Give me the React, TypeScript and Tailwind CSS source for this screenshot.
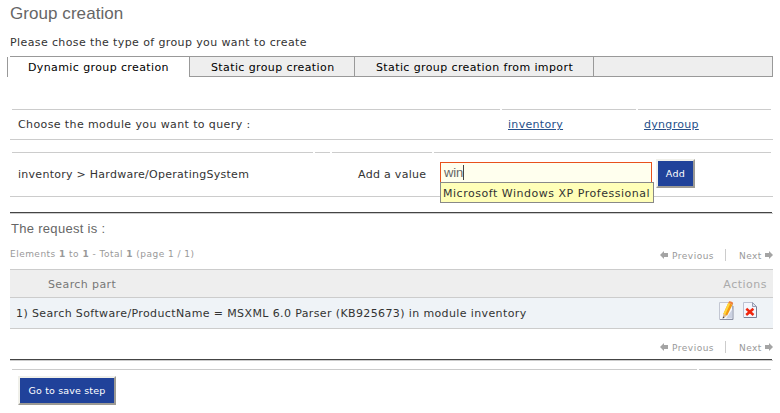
import type { ReactNode } from "react";

const sans = "font-['DejaVu_Sans',sans-serif]";
const arial = "font-['Liberation_Sans',sans-serif]";

function Arrow({ flip = false }: { flip?: boolean }) {
  return (
    <svg width="8" height="8" viewBox="0 0 8 8" className={flip ? "-scale-x-100" : ""}>
      <path d="M0 4 L4 0 V2 H8 V6 H4 V8 Z" fill="#a4a4a4" />
    </svg>
  );
}

function Pager() {
  return (
    <div className="flex h-3 items-center text-[9px] leading-3 text-[#999]">
      <Arrow />
      <span className="ml-1 w-[53px] pt-[2px] tracking-[0.5px]">Previous</span>
      <span className="h-3 w-px bg-[#ccc]" />
      <span className="ml-[13px] w-[26px] pt-[2px] tracking-[0.45px]">Next</span>
      <Arrow flip />
    </div>
  );
}

function CellLines({ widths }: { widths: string[] }) {
  return (
    <div className="ml-[2px] flex h-px gap-[2px]">
      {widths.map((w) => (
        <span key={w} className={`h-px bg-[#ccc] ${w}`} />
      ))}
    </div>
  );
}

function Rule() {
  return (
    <div className="h-[2px] border-b border-[#ccc]">
      <div className="mr-px h-px bg-[#444]" />
    </div>
  );
}

function Button({ className, children }: { className: string; children: ReactNode }) {
  return (
    <button
      className={`h-[29px] border-2 border-t-[#f0f0ea] border-r-[#9c9a94] border-b-[#9c9a94] border-l-[#f0f0ea] bg-[#20429a] text-[9.5px] leading-3 whitespace-nowrap text-white ${className}`}
    >
      {children}
    </button>
  );
}

function EditIcon() {
  return (
    <svg width="16" height="20" viewBox="0 0 16 20">
      <path d="M.5 1.5h13v17H.5z" fill="#f7f8fc" stroke="#c3c7d3" />
      <path d="M14 5v13.5H1" fill="none" stroke="#8b90a3" />
      <path d="M7 17.5h6.5V8z" fill="#ccd2e2" />
      <path d="M4.3 13l5-11.2 4.2 2L8.2 14.6z" fill="#f39a12" />
      <path d="M4.3 13l5-11.2 1.9.9L6.2 13.8z" fill="#ffd63c" />
      <path d="M9.3 1.8L10.2.2q2.5-.3 4 1.8l-.7 1.8z" fill="#f0803a" />
      <path d="M3.8 17.4l.5-4.4 3.9 1.6z" fill="#dcb98c" />
      <path d="M3.7 17.8l.3-2.3 1.6.7z" fill="#3c3c44" />
    </svg>
  );
}

function DeleteIcon() {
  return (
    <svg width="14" height="16" viewBox="0 0 14 16">
      <path d="M.5.5h9l4 4v11H.5z" fill="#f4f6fd" stroke="#bcc2d2" />
      <path d="M13.5 4.5v11H1" fill="none" stroke="#7b8197" />
      <path d="M9.5.5v4h4z" fill="#dce1ee" stroke="#989eb2" />
      <path d="M3.3 6.8l7.2 6.2M10.4 6.8l-7.2 6.2" stroke="#f0260e" strokeWidth="2.5" />
    </svg>
  );
}

export default function App() {
  return (
    <div className={`h-[413px] w-[780px] overflow-hidden bg-white text-[11px] leading-4 tracking-[0.39px] whitespace-nowrap text-[#333] ${sans}`}>
      <div className="ml-[10px] w-[763px]">
        <header className="h-14">
          <h1 className={`h-[35px] pt-1 text-[17px] leading-5 tracking-[0.06px] text-[#666] ${arial}`}>Group creation</h1>
          <p>Please chose the type of group you want to create</p>
        </header>

        <nav className="-ml-[3px] flex h-[21px] text-black">
          <div className="mt-px w-[3px] border-l border-[#999]" />
          <div className="w-[180px] border-t border-r border-[#999] bg-white pt-[3px] pl-[18px]">Dynamic group creation</div>
          <div className="w-[165px] border-y border-r border-[#999] bg-[#eee] pt-[3px] pl-[21px]">Static group creation</div>
          <div className="w-[239px] border-y border-r border-[#999] bg-[#eee] pt-[3px] pl-[21px]">Static group creation from import</div>
          <div className="flex-1 border-y border-r border-[#999] bg-[#eee]" />
        </nav>

        <section className="mt-8 h-[31px] border-b border-[#ccc]">
          <CellLines widths={["w-[488px]", "w-[134px]", "w-[133px]"]} />
          <div className="flex pt-[7px] pl-2">
            <span className="w-[490px]">Choose the module you want to query :</span>
            <span className="w-[136px] tracking-[0.3px]">
              <a className="text-[#26508a] underline">inventory</a>
            </span>
            <a className="tracking-[0.3px] text-[#26508a] underline">dyngroup</a>
          </div>
        </section>

        <section className="mt-3 h-[45px] border-b border-[#ccc]">
          <CellLines widths={["w-[301px]", "w-[15px]", "w-[100px]", "w-[337px]"]} />
          <div className="flex pl-2">
            <span className="w-[340px] pt-[14px] tracking-[0.27px]">inventory &gt; Hardware/OperatingSystem</span>
            <span className="w-[82px] pt-[14px] tracking-[0.3px]">Add a value</span>
            <div className="relative mt-[9px] h-5 w-[212px]">
              <div className={`flex h-[21px] border border-[#e8511c] bg-[#ffffee] pt-[2px] pl-[3px] text-[13px] leading-[16px] tracking-[-0.1px] text-[#666] ${arial}`}>
                win
                <span className="h-[15px] w-px bg-[#444]" />
              </div>
              <div className="absolute top-5 left-0 z-10 h-[21px] w-[214px] border border-[#888] bg-[#ffffb8] pt-[3px] pl-[2px] leading-[15px] tracking-[0.52px]">
                Microsoft Windows XP Professional
              </div>
            </div>
            <Button className="mt-[6px] ml-1 w-[39px] tracking-[0.3px]">Add</Button>
          </div>
        </section>

        <div className="mt-[15px]">
          <Rule />
        </div>

        <section className="flex h-[55px] justify-between">
          <div>
            <h2 className={`pt-[7px] pl-px text-[13px] leading-4 tracking-[0.3px] text-[#666] ${arial}`}>The request is :</h2>
            <p className="pt-[11px] text-[9px] leading-3 tracking-[0.47px] text-[#999]">
              Elements <b>1</b> to <b>1</b> - Total <b>1</b> (page 1 / 1)
            </p>
          </div>
          <div className="pt-[35px]">
            <Pager />
          </div>
        </section>

        <section className="border-y border-[#ccc]">
          <div className="flex h-7 justify-between border-b border-[#ccc] bg-[#eee] pt-[7px] pr-[6px] pl-[38px]">
            <span className="text-[#777]">Search part</span>
            <span className="tracking-[0.5px] text-[#aaa]">Actions</span>
          </div>
          <div className="flex h-[30px] bg-[#eff3f7] pl-[6px]">
            <span className="w-[703px] pt-2 tracking-[0.38px]">1) Search Software/ProductName = MSXML 6.0 Parser (KB925673) in module inventory</span>
            <span className="w-6 pt-[3px]">
              <EditIcon />
            </span>
            <span className="pt-1">
              <DeleteIcon />
            </span>
          </div>
        </section>

        <div className="flex h-[30px] justify-end pt-3">
          <Pager />
        </div>
        <Rule />

        <section className="mt-2">
          <CellLines widths={["w-[685px]", "w-[72px]"]} />
          <Button className="mt-[6px] ml-2 block w-[98px] tracking-[0.15px]">Go to save step</Button>
        </section>
      </div>
    </div>
  );
}
